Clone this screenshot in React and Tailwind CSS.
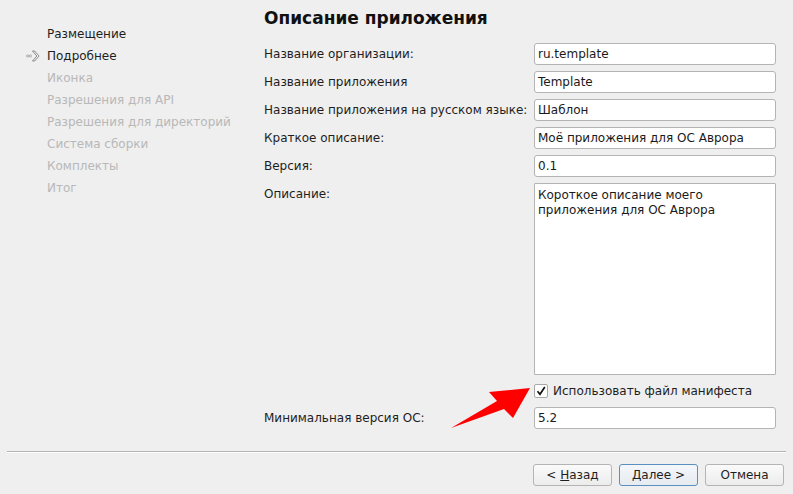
import React from "react";

function NavIcon() {
  return (
    <svg width="14" height="12" viewBox="0 0 14 12" className="absolute left-[-21px] top-[5px]">
      <circle cx="1.6" cy="6" r="1.1" fill="none" stroke="#9a9a9a" strokeWidth="0.8" />
      <circle cx="4.4" cy="6" r="1.1" fill="none" stroke="#9a9a9a" strokeWidth="0.8" />
      <path d="M6.5 1 L8.6 1 L13 6 L8.6 11 L6.5 11 L10.9 6 Z" fill="#f7f7f7" stroke="#707070" strokeWidth="0.8" strokeLinejoin="round" />
    </svg>
  );
}

function Field({ value }) {
  return (
    <div className="h-[22px] w-[242px] bg-white border border-[#b4b4b4] rounded-[3px] pl-[3px] flex items-center text-[#1a1a1a]">
      {value}
    </div>
  );
}

function Row({ label, value }) {
  return (
    <div className="flex items-center h-[22px]">
      <div className="flex-1">{label}</div>
      <Field value={value} />
    </div>
  );
}

export default function App() {
  const nav = [
    ["Размещение", true],
    ["Подробнее", true, true],
    ["Иконка", false],
    ["Разрешения для API", false],
    ["Разрешения для директорий", false],
    ["Система сборки", false],
    ["Комплекты", false],
    ["Итог", false],
  ];
  return (
    <div
      className="w-[793px] h-[494px] bg-[#efefef] flex flex-col text-[12px] text-[#1e1e1e] relative overflow-hidden"
      style={{ fontFamily: '"DejaVu Sans", sans-serif' }}
    >
      <div className="flex flex-1">
        <div className="w-[264px] pl-[47px] pt-[23px]">
          {nav.map(([t, on, cur]) => (
            <div
              key={t}
              className={"relative h-[22px] leading-[22px] " + (on ? "text-[#1e1e1e]" : "text-[#b8b8b8]")}
            >
              {cur && <NavIcon />}
              {t}
            </div>
          ))}
        </div>
        <div className="flex-1 pr-[17px] pt-[7px]">
          <div className="text-[17px] font-bold leading-[22px] h-[22px] text-[#111]">Описание приложения</div>
          <div className="mt-[14px] flex flex-col gap-[6px]">
            <Row label="Название организации:" value="ru.template" />
            <Row label="Название приложения" value="Template" />
            <Row label="Название приложения на русском языке:" value="Шаблон" />
            <Row label="Краткое описание:" value="Моё приложения для ОС Аврора" />
            <Row label="Версия:" value="0.1" />
            <div className="flex">
              <div className="flex-1 leading-[22px]">Описание:</div>
              <div className="h-[192px] w-[242px] bg-white border border-[#b4b4b4] rounded-[1px] px-[3px] pt-[4px] leading-[15px] text-[#1a1a1a]">
                Короткое описание моего
                <br />
                приложения для ОС Аврора
              </div>
            </div>
          </div>
          <div className="flex mt-[9px] h-[14px] items-center">
            <div className="flex-1" />
            <div className="w-[242px] flex items-center">
              <div className="w-[14px] h-[14px] bg-white border border-[#a8a8a8] rounded-[2px] flex items-center justify-center">
                <svg width="10" height="10" viewBox="0 0 10 10">
                  <path d="M1.5 5.2 L4 8.3 L8.8 1" fill="none" stroke="#111" strokeWidth="1.7" />
                </svg>
              </div>
              <span className="ml-[5px]">Использовать файл манифеста</span>
            </div>
          </div>
          <div className="mt-[9px]">
            <Row label="Минимальная версия ОС:" value="5.2" />
          </div>
        </div>
      </div>
      <div className="mx-[7px] h-[2px] border-t border-[#b3b3b3] bg-white" />
      <div className="flex justify-end gap-[7px] pr-[9px] pt-[11px] pb-[8px]">
        <button className="w-[79px] h-[22px] rounded-[3px] border border-[#b4b4b4] bg-gradient-to-b from-[#fafafa] to-[#ececec] text-[12px] text-[#1e1e1e]">
          &lt; <span className="underline">Н</span>азад
        </button>
        <button className="w-[79px] h-[22px] rounded-[3px] border border-[#5b8fc2] bg-gradient-to-b from-[#f4f7fa] to-[#e6ebf0] text-[12px] text-[#1e1e1e]">
          <span className="underline">Д</span>алее &gt;
        </button>
        <button className="w-[79px] h-[22px] rounded-[3px] border border-[#b4b4b4] bg-gradient-to-b from-[#fafafa] to-[#ececec] text-[12px] text-[#1e1e1e]">
          Отмена
        </button>
      </div>
      <svg className="absolute left-[448px] top-[384px]" width="90" height="50" viewBox="448 384 90 50">
        <polygon points="451,428 497,401 489,392 530,388 513,418 504,409" fill="#ff0000" />
      </svg>
    </div>
  );
}
